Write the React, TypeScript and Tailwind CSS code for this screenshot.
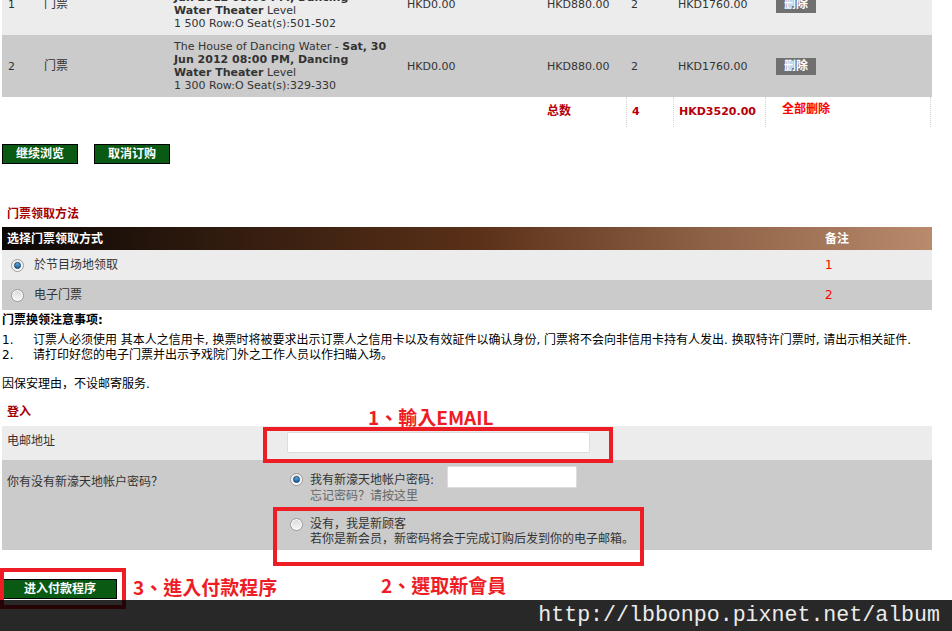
const rows = [
  {
    no: "1",
    bold: "Sat, 30",
    lines: ["Jun 2012 08:00 PM, Dancing", "Water Theater"],
    seat: "1 500 Row:O Seat(s):501-502",
    bg: "bg-[#ececec]",
  },
  {
    no: "2",
    bold: "Sat, 30",
    lines: ["Jun 2012 08:00 PM, Dancing", "Water Theater"],
    seat: "1 300 Row:O Seat(s):329-330",
    bg: "bg-[#cbcbcb]",
  },
];

function Radio({ checked }: { checked?: boolean }) {
  return (
    <span className="flex h-[13px] w-[13px] shrink-0 items-center justify-center rounded-full border border-[#9a9a9a] bg-gradient-to-b from-[#d8d8d8] to-[#fafafa] shadow-[inset_0_0_0_1px_#ffffff]">
      {checked && (
        <span className="h-[7px] w-[7px] rounded-full border border-[#0f3f6e] bg-gradient-to-b from-[#5fb0e8] to-[#1a5f9e]" />
      )}
    </span>
  );
}

function GreenButton({ label, w }: { label: string; w: string }) {
  return (
    <button
      type="button"
      className={`flex h-[20px] items-center justify-center border border-black bg-[#0b5a14] text-[12px] font-bold leading-none text-white ${w}`}
    >
      {label}
    </button>
  );
}

export default function App() {
  return (
    <main className="relative h-[631px] w-[952px] overflow-hidden bg-white font-['DejaVu_Sans','Noto_Sans_CJK_SC',sans-serif] text-[12px] text-[#333]">
      <div className="w-[932px] pl-[2px]">
        {/* Order table */}
        <div className="-mt-[27px]">
          {rows.map((r) => (
            <div
              key={r.no}
              className={`grid h-[62px] grid-cols-[36px_130px_233px_140px_84px_47px_98px_162px] items-center text-[11px] leading-[13px] ${r.bg}`}
            >
              <div className="pl-[6px]">{r.no}</div>
              <div className="pl-[6px] text-[12px]">门票</div>
              <div className="pl-[6px] whitespace-nowrap">
                <div>
                  The House of Dancing Water - <b>{r.bold}</b>
                </div>
                <div className="font-bold">{r.lines[0]}</div>
                <div>
                  <b>{r.lines[1]}</b> Level
                </div>
                <div>{r.seat}</div>
              </div>
              <div className="pl-[6px]">HKD0.00</div>
              <div className="pl-[6px]">HKD880.00</div>
              <div className="pl-[6px]">2</div>
              <div className="pl-[6px]">HKD1760.00</div>
              <div className="pl-[6px]">
                <span className="flex h-[17px] w-[40px] items-center justify-center bg-[#707070] text-[12px] font-bold text-white">
                  删除
                </span>
              </div>
            </div>
          ))}
          <div className="grid h-[30px] grid-cols-[539px_85px_47px_92px_166px] items-center text-[11px] font-bold text-[#b5000a]">
            <div />
            <div className="pb-[2px] pl-[6px] text-[12px]">总数</div>
            <div className="flex h-full items-center border-l border-dotted border-[#d4d4d4] pl-[5px]">4</div>
            <div className="flex h-full items-center border-l border-dotted border-[#d4d4d4] pl-[5px]">HKD3520.00</div>
            <div className="flex h-full items-start border-x border-dotted border-[#d4d4d4] pb-[6px] pl-[16px] pt-[3px] text-[12px] text-[#f00]">
              全部删除
            </div>
          </div>
        </div>

        {/* Actions */}
        <div className="mt-[17px] flex gap-[16px]">
          <GreenButton label="继续浏览" w="w-[76px]" />
          <GreenButton label="取消订购" w="w-[76px]" />
        </div>

        {/* Ticket collection */}
        <h3 className="mt-[42px] pl-[5px] text-[12px] font-bold leading-[16px] text-[#a50000]">门票领取方法</h3>
        <div className="mt-[5px]">
          <div className="flex h-[23px] items-center bg-[linear-gradient(to_right,#0a0605,#2e1a0e_22%,#5a3018_51%,#8e6246_76%,#b98a6c)] font-bold text-white">
            <div className="w-[823px] pl-[5px]">选择门票领取方式</div>
            <div>备注</div>
          </div>
          <div className="flex h-[30px] items-center bg-[#ececec]">
            <div className="flex w-[823px] items-center gap-[10px] pl-[9px]">
              <Radio checked />
              <span>於节目场地领取</span>
            </div>
            <div className="text-[#f00]">1</div>
          </div>
          <div className="flex h-[30px] items-center bg-[#cbcbcb]">
            <div className="flex w-[823px] items-center gap-[10px] pl-[9px]">
              <Radio />
              <span>电子门票</span>
            </div>
            <div className="text-[#f00]">2</div>
          </div>
        </div>

        {/* Notes */}
        <div className="mt-[2px] text-black">
          <div className="font-bold leading-[16px]">门票换领注意事项:</div>
          <div className="mt-[5px] leading-[15px] whitespace-nowrap">
            <div className="flex">
              <span className="w-[31px]">1.</span>
              <span>
                订票人必须使用 其本人之信用卡, 换票时将被要求出示订票人之信用卡以及有效証件以确认身份, 门票将不会向非信用卡持有人发出. 换取特许门票时, 请出示相关証件.
              </span>
            </div>
            <div className="flex">
              <span className="w-[31px]">2.</span>
              <span>请打印好您的电子门票并出示予戏院门外之工作人员以作扫瞄入场。</span>
            </div>
          </div>
          <div className="mt-[14px] leading-[15px]">因保安理由，不设邮寄服务.</div>
        </div>

        {/* Login */}
        <h3 className="mt-[12px] pl-[5px] text-[12px] font-bold leading-[16px] text-[#a50000]">登入</h3>
        <div className="mt-[6px]">
          <div className="flex h-[34px] items-start bg-[#ececec] pt-[6px]">
            <div className="w-[285px] pl-[5px] pt-[2px] leading-[14px]">电邮地址</div>
            <div className="h-[21px] w-[303px] rounded-[2px] border border-[#dadde2] bg-white" />
          </div>
          <div className="flex h-[90px] items-start bg-[#cbcbcb]">
            <div className="w-[288px] pl-[5px] pt-[14px] font-['Noto_Sans_CJK_SC',sans-serif] leading-[14px]">
              你有没有新濠天地帐户密码？
            </div>
            <div className="pt-[6px]">
              <div className="flex items-start gap-[7px]">
                <span className="mt-[7px]">
                  <Radio checked />
                </span>
                <div>
                  <div className="flex items-start">
                    <span className="mt-[7px] leading-[14px]">我有新濠天地帐户密码:</span>
                    <span className="ml-[13px] h-[22px] w-[130px] rounded-[2px] border border-[#dadde2] bg-white" />
                  </div>
                  <div className="font-['Noto_Sans_CJK_SC',sans-serif] leading-[14px] text-[#666]">忘记密码？请按这里</div>
                </div>
              </div>
              <div className="mt-[15px] flex items-start gap-[7px]">
                <span className="mt-[1px]">
                  <Radio />
                </span>
                <div className="leading-[15px]">
                  <div>没有，我是新顾客</div>
                  <div>若你是新会员，新密码将会于完成订购后发到你的电子邮箱。</div>
                </div>
              </div>
            </div>
          </div>
        </div>

        <div className="mt-[29px] pl-[1px]">
          <GreenButton label="进入付款程序" w="w-[114px]" />
        </div>
      </div>

      {/* Annotations */}
      <div className="absolute left-[263px] top-[427px] h-[36px] w-[350px] border-[4px] border-[#ee1c25]" />
      <div className="absolute left-[273px] top-[507px] h-[59px] w-[371px] border-[4px] border-[#ee1c25]" />
      <div className="absolute left-0 top-[568px] h-[41px] w-[126px] border-[4px] border-[#ee1c25]" />
      <div className="absolute left-[368px] top-[405px] font-['Noto_Sans_CJK_TC',sans-serif] text-[19px] font-bold leading-[24px] text-[#ee1c25]">
        1、輸入EMAIL
      </div>
      <div className="absolute left-[381px] top-[573px] font-['Noto_Sans_CJK_TC',sans-serif] text-[19px] font-bold leading-[24px] text-[#ee1c25]">
        2、選取新會員
      </div>
      <div className="absolute left-[133px] top-[575px] font-['Noto_Sans_CJK_TC',sans-serif] text-[19px] font-bold leading-[24px] text-[#ee1c25]">
        3、進入付款程序
      </div>

      {/* Watermark bar */}
      <div className="absolute bottom-0 left-0 flex h-[31px] w-full items-center justify-end bg-black/[0.843] pr-[12px]">
        <span className="font-['Liberation_Mono',monospace] text-[21.6px] leading-none text-[#ececec]">
          http://lbbonpo.pixnet.net/album
        </span>
      </div>
    </main>
  );
}
